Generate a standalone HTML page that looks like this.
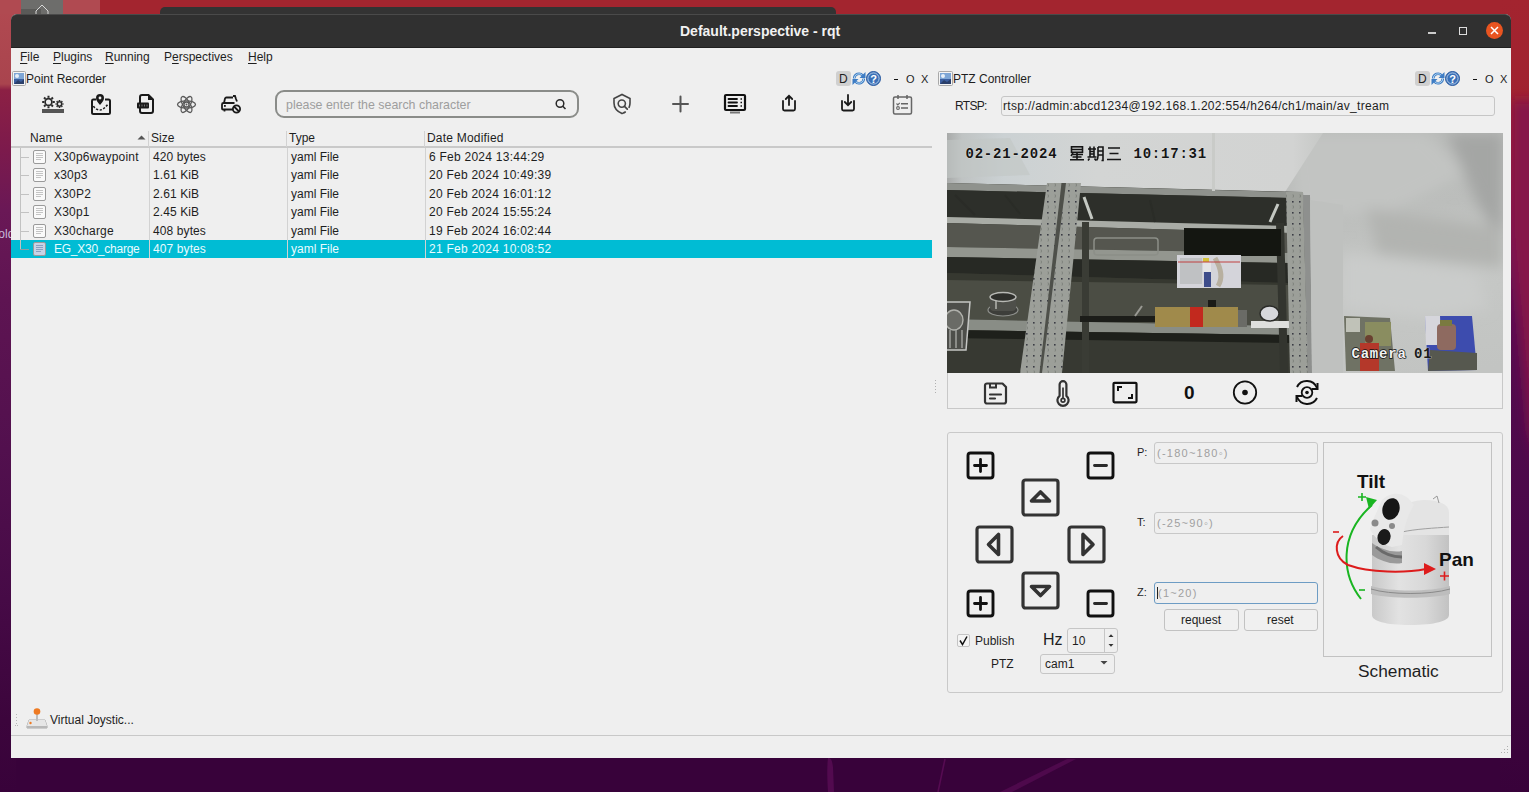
<!DOCTYPE html>
<html><head><meta charset="utf-8">
<style>
*{margin:0;padding:0;box-sizing:border-box}
html,body{width:1529px;height:792px;overflow:hidden}
body{position:relative;font-family:"Liberation Sans",sans-serif;font-size:12px;color:#1e1e1e;
background:#38023a}
.a{position:absolute}
.t{position:absolute;white-space:pre;line-height:12px;font-size:12px}
#win{left:11px;top:14px;width:1500px;height:744px;background:#efefef;border-radius:6px 6px 0 0}
#tbar{left:11px;top:14px;width:1500px;height:34px;background:#303030;border-radius:6px 6px 0 0;border-top:1px solid #4a4a4a;border-bottom:1px solid #202020}
.ul{text-decoration:underline;text-underline-offset:2px}
.hdrline{background:#c9c9c9}
.vsep{background:#d2d2d2;width:1px}
.row{left:11px;width:921px;height:18px}
.sel{background:#00bcd4}
.dim{color:#9a9a9a}
</style></head><body>
<!-- desktop bits -->
<div class="a" style="left:0;top:0;width:1529px;height:14px;background:#a3252f"></div>
<div class="a" style="left:0;top:0;width:16px;height:792px;background:linear-gradient(to bottom,#b24a51 0px,#a9444e 84px,#8c2044 90px,#7c1a4c 150px,#6a1856 210px,#5e1452 300px,#52104e 450px,#460a46 600px,#3c053c 720px,#38023a 792px)"></div>
<div class="a" style="left:1500px;top:0;width:29px;height:792px;background:linear-gradient(to bottom,#a3242f 0px,#a0222f 110px,#8c1c44 190px,#741452 250px,#5a0c50 320px,#500a4c 420px,#460747 600px,#3c043c 720px,#38023a 792px)"></div>
<div class="a" style="left:0;top:0;width:100px;height:14px;background:#b04a51"></div>
<svg class="a" style="left:1500px;top:0" width="29" height="792"><defs><filter id="bl2"><feGaussianBlur stdDeviation="6"/></filter></defs><polygon points="11,100 40,100 40,470 29,430 11,230" fill="#86184a" filter="url(#bl2)"/></svg>
<div class="a" style="left:21px;top:0;width:42px;height:14px;background:#6d6d6b"></div>
<div class="a" style="left:21px;top:9px;width:20px;height:5px;background:#5a5a58"></div>
<svg class="a" style="left:34px;top:4px" width="16" height="10"><path d="M2 10V7L8 1L14 7V10" fill="none" stroke="#d8d8d8" stroke-width="1"/></svg>
<div class="a" style="left:0;top:226px;width:12px;height:14px;overflow:hidden"><div class="t" style="left:-9px;top:2px;color:#c8b8d8">Folder</div></div>
<div class="a" style="left:160px;top:7px;width:676px;height:8px;background:#333;border-radius:5px 5px 0 0"></div>
<svg class="a" style="left:780px;top:757px" width="320" height="35"><path d="M48 1C51 1 52 3 53 10L54 35H48C47 20 47 8 48 1Z" fill="#520a4f"/><path d="M165 2L158 35" stroke="#560b52" stroke-width="1.6"/><path d="M287 2H296L232 35H220Z" fill="#4e094c"/></svg>
<!-- window -->
<div id="win" class="a" style="height:743.5px"></div>
<div id="tbar" class="a"></div>
<div class="t" style="left:680px;top:24px;color:#f2f2f2;font-weight:bold;font-size:14px;line-height:14px">Default.perspective - rqt</div>
<div class="a" style="left:1428px;top:32px;width:8px;height:2px;background:#ccc"></div>
<div class="a" style="left:1459px;top:27px;width:8px;height:8px;border:1.5px solid #ddd"></div>
<div class="a" style="left:1486px;top:22px;width:17px;height:17px;border-radius:50%;background:#e95420"></div>
<svg class="a" style="left:1486px;top:22px" width="17" height="17"><path d="M5 5L12 12M12 5L5 12" stroke="#fff" stroke-width="1.5"/></svg>

<!-- menu -->
<div class="t" style="left:20px;top:51px"><span class="ul">F</span>ile</div>
<div class="t" style="left:53px;top:51px"><span class="ul">P</span>lugins</div>
<div class="t" style="left:105px;top:51px"><span class="ul">R</span>unning</div>
<div class="t" style="left:164px;top:51px">P<span class="ul">e</span>rspectives</div>
<div class="t" style="left:248px;top:51px"><span class="ul">H</span>elp</div>

<!-- point recorder title -->
<svg class="a" style="left:12px;top:71px" width="14" height="15"><rect x="0.5" y="0.5" width="13" height="14" rx="1" fill="#f4f4f4" stroke="#a8a8a8"/><rect x="2" y="2" width="10" height="11" fill="#3b5fa0"/><rect x="2" y="2" width="10" height="6" fill="#7ea6d6"/><circle cx="5" cy="5" r="2" fill="#e8f0f8"/><path d="M2 13L6 9L9 11L12 8V13Z" fill="#2a3f6a"/></svg>
<div class="t" style="left:26px;top:72.5px">Point Recorder</div>

<!-- dock buttons left -->
<div class="a" style="left:836px;top:71px;width:15px;height:15px;background:#d0d0d0;border-radius:3px"></div>
<div class="t" style="left:839px;top:73px;font-size:12px">D</div>
<svg class="a" style="left:852px;top:71px" width="14" height="15"><g fill="none" stroke="#3d7cc4" stroke-width="2.6"><path d="M2.2 7.5A4.8 4.8 0 0 1 10.6 4.4"/><path d="M11.8 7.5A4.8 4.8 0 0 1 3.4 10.6"/></g><g fill="none" stroke="#bfe0f6" stroke-width="0.9"><path d="M2.2 7.5A4.8 4.8 0 0 1 10.6 4.4"/><path d="M11.8 7.5A4.8 4.8 0 0 1 3.4 10.6"/></g><path d="M13.5 1V7H7.5Z" fill="#3d7cc4"/><path d="M0.5 14V8H6.5Z" fill="#3d7cc4"/></svg>
<svg class="a" style="left:866px;top:71px" width="15" height="15"><circle cx="7.5" cy="7.5" r="7" fill="#3a70b8" stroke="#2a5aa0"/><circle cx="7.5" cy="7.5" r="5.6" fill="none" stroke="#c8dcf0" stroke-width="0.8"/><text x="7.5" y="11.5" font-family="Liberation Sans" font-size="11" font-weight="bold" fill="#fff" text-anchor="middle">?</text></svg>
<div class="a" style="left:894px;top:78.5px;width:3.5px;height:1.6px;background:#111"></div>
<div class="t" style="left:906px;top:74px;font-size:11px;line-height:11px">O</div>
<div class="t" style="left:921px;top:74px;font-size:11px;line-height:11px">X</div>

<!-- toolbar icons -->
<svg class="a" style="left:40px;top:93px" width="26" height="22"><circle cx="8.5" cy="9" r="3.4" fill="none" stroke="#2a2a2a" stroke-width="1.7"/><path d="M12.70 9.00L14.80 9.00M11.47 11.97L12.95 13.45M8.50 13.20L8.50 15.30M5.53 11.97L4.05 13.45M4.30 9.00L2.20 9.00M5.53 6.03L4.05 4.55M8.50 4.80L8.50 2.70M11.47 6.03L12.95 4.55" stroke="#2a2a2a" stroke-width="2.0"/><circle cx="19.5" cy="11" r="2.2" fill="none" stroke="#2a2a2a" stroke-width="1.5"/><path d="M22.40 11.00L23.50 11.00M21.55 13.05L22.33 13.83M19.50 13.90L19.50 15.00M17.45 13.05L16.67 13.83M16.60 11.00L15.50 11.00M17.45 8.95L16.67 8.17M19.50 8.10L19.50 7.00M21.55 8.95L22.33 8.17" stroke="#2a2a2a" stroke-width="1.6"/><rect x="2" y="16" width="22" height="4" fill="#555"/></svg>
<svg class="a" style="left:89px;top:92px" width="24" height="24">
 <path d="M7 7.5H4.2A1.5 1.5 0 0 0 3 9V20.5A1.5 1.5 0 0 0 4.5 22H19.5A1.5 1.5 0 0 0 21 20.5V9A1.5 1.5 0 0 0 19.5 7.5H16" fill="none" stroke="#1a1a1a" stroke-width="2"/>
 <path d="M11 13C8.5 10 7 8.5 7 6A4 4 0 0 1 15 6C15 8.5 13.5 10 11 13Z" fill="#1a1a1a"/>
 <circle cx="11" cy="6" r="1.4" fill="#efefef"/>
 <path d="M4.5 14C6 17 9 18 11 18C14 18 16.5 15 19 12" fill="none" stroke="#1a1a1a" stroke-width="1.6" stroke-dasharray="2.2 1.6"/>
</svg>
<svg class="a" style="left:135px;top:93px" width="22" height="22">
 <path d="M5 4A2 2 0 0 1 7 2H13.5L18 6.5V18A2 2 0 0 1 16 20H7A2 2 0 0 1 5 18Z" fill="none" stroke="#1a1a1a" stroke-width="2"/>
 <path d="M13 2V7H18Z" fill="#1a1a1a"/>
 <rect x="2" y="9.5" width="12" height="6" rx="1" fill="#1a1a1a"/>
 <path d="M4.5 11.5V13.5M7 11.5V13.5M9.5 11.5V13.5M12 11.5V13.5" stroke="#888" stroke-width="0.8"/>
</svg>
<svg class="a" style="left:176px;top:95px" width="21" height="19">
 <g fill="none" stroke="#5a5a5a" stroke-width="1.3">
  <ellipse cx="10.5" cy="9.5" rx="9" ry="3.6"/>
  <ellipse cx="10.5" cy="9.5" rx="9" ry="3.6" transform="rotate(60 10.5 9.5)"/>
  <ellipse cx="10.5" cy="9.5" rx="9" ry="3.6" transform="rotate(120 10.5 9.5)"/>
  <circle cx="10.5" cy="9.5" r="2.5"/>
 </g>
 <circle cx="10.5" cy="9.5" r="1" fill="#5a5a5a"/>
</svg>
<svg class="a" style="left:220px;top:94px" width="22" height="20">
 <g fill="none" stroke="#1a1a1a" stroke-width="1.8">
  <path d="M14.5 9H3.5A1.5 1.5 0 0 0 2 10.5V14.5A1 1 0 0 0 3 15.5H13"/>
  <path d="M4 9L5 4.5A1.5 1.5 0 0 1 6.5 3.5H13"/>
  <path d="M13 2H15L16 5L17 7.5"/>
  <path d="M4.5 15.5V17.5"/>
 </g>
 <rect x="4" y="11" width="1.8" height="1.8" fill="#1a1a1a"/>
 <circle cx="16.5" cy="15" r="3.6" fill="#efefef" stroke="#1a1a1a" stroke-width="1.8"/>
 <path d="M14 12.5L19 17.5" stroke="#1a1a1a" stroke-width="1.8"/>
</svg>

<!-- search -->
<div class="a" style="left:275px;top:90px;width:304px;height:28px;border:2px solid #8a8c89;border-radius:9px"></div>
<div class="t dim" style="left:286px;top:98.5px;font-size:12.4px;line-height:12.4px;color:#9e9e9e">please enter the search character</div>
<svg class="a" style="left:554px;top:97px" width="14" height="14"><circle cx="6" cy="6.5" r="3.8" fill="none" stroke="#2a2a2a" stroke-width="1.5"/><path d="M8.8 9.3L11.5 12" stroke="#2a2a2a" stroke-width="1.6"/></svg>

<svg class="a" style="left:611px;top:92px" width="22" height="24">
 <path d="M14.3 20C13.3 20.7 12.2 21.1 11 21.6C6.5 19.6 3 16 3 11V6.5L11 2.5L19 6.5V11C19 12.6 18.7 14 18.1 15.3" fill="none" stroke="#444" stroke-width="1.6" stroke-linecap="round"/>
 <circle cx="10.8" cy="11.6" r="3.6" fill="none" stroke="#444" stroke-width="1.6"/>
 <path d="M13.5 14.3L16.3 17.1" stroke="#444" stroke-width="1.7" stroke-linecap="round"/>
</svg>
<svg class="a" style="left:672px;top:95px" width="18" height="18"><path d="M8.5 1.5V16.5M1 9H16" stroke="#555" stroke-width="2" stroke-linecap="round"/></svg>
<svg class="a" style="left:722px;top:92px" width="26" height="24">
 <rect x="3" y="3" width="20" height="15" rx="1" fill="none" stroke="#111" stroke-width="2.2"/>
 <path d="M6.5 7H15M6.5 10.5H15M6.5 14H15" stroke="#111" stroke-width="1.8" stroke-linecap="round"/>
 <path d="M18.5 7H20M18.5 10.5H20M18.5 14H20" stroke="#111" stroke-width="1.6"/>
 <rect x="8" y="19.5" width="10" height="2" fill="#777"/>
</svg>
<svg class="a" style="left:780px;top:93px" width="18" height="20">
 <path d="M3 8V16A1.5 1.5 0 0 0 4.5 17.5H13.5A1.5 1.5 0 0 0 15 16V8" fill="none" stroke="#1a1a1a" stroke-width="1.8" stroke-linecap="round"/>
 <path d="M9 12V3M5.8 6L9 2.8L12.2 6" fill="none" stroke="#1a1a1a" stroke-width="1.8" stroke-linecap="round"/>
</svg>
<svg class="a" style="left:839px;top:93px" width="18" height="20">
 <path d="M3 8V16A1.5 1.5 0 0 0 4.5 17.5H13.5A1.5 1.5 0 0 0 15 16V8" fill="none" stroke="#1a1a1a" stroke-width="1.8" stroke-linecap="round"/>
 <path d="M9 2V12M5.8 9L9 12.2L12.2 9" fill="none" stroke="#1a1a1a" stroke-width="1.8" stroke-linecap="round"/>
</svg>
<svg class="a" style="left:891px;top:94px" width="23" height="22">
 <rect x="2.5" y="3" width="18" height="17" rx="1.5" fill="none" stroke="#666" stroke-width="1.5"/>
 <path d="M7 1V5M16 1V5" stroke="#666" stroke-width="1.5"/>
 <path d="M5.5 9.5L6.8 10.8L8.8 8.8" fill="none" stroke="#666" stroke-width="1.2"/>
 <path d="M10 9.8H17M10 14H17" stroke="#666" stroke-width="1.5"/>
 <circle cx="7" cy="14" r="1.4" fill="none" stroke="#666" stroke-width="1.1"/>
</svg>

<!-- table -->
<div class="t" style="left:30px;top:132px;letter-spacing:0.1px">Name</div>
<svg class="a" style="left:137px;top:134px" width="9" height="6"><path d="M0.5 5.5L4.5 1.5L8.5 5.5Z" fill="#555"/></svg>
<div class="t" style="left:151px;top:132px">Size</div>
<div class="t" style="left:289px;top:132px">Type</div>
<div class="t" style="left:427px;top:132px;letter-spacing:0.2px">Date Modified</div>
<div class="a hdrline" style="left:11px;top:146px;width:921px;height:2px"></div>
<div class="a vsep" style="left:148px;top:131px;height:16px"></div>
<div class="a vsep" style="left:286px;top:131px;height:16px"></div>
<div class="a vsep" style="left:424px;top:131px;height:16px"></div>
<div class="a sel" style="left:11px;top:240px;width:921px;height:18px"></div>
<div class="a vsep" style="left:149px;top:148px;height:110px"></div>
<div class="a vsep" style="left:287px;top:148px;height:110px"></div>
<div class="a vsep" style="left:425px;top:148px;height:110px"></div>
<div class="a" style="left:20px;top:148px;width:1px;height:101px;background:#c2c2c2"></div>
<div class="a" style="left:20px;top:156.5px;width:9px;height:1px;background:#c2c2c2"></div>
<div class="a" style="left:20px;top:174.5px;width:9px;height:1px;background:#c2c2c2"></div>
<div class="a" style="left:20px;top:193.5px;width:9px;height:1px;background:#c2c2c2"></div>
<div class="a" style="left:20px;top:211.5px;width:9px;height:1px;background:#c2c2c2"></div>
<div class="a" style="left:20px;top:230.5px;width:9px;height:1px;background:#c2c2c2"></div>
<div class="a" style="left:20px;top:248.5px;width:9px;height:1px;background:#8f9ea3"></div>
<svg class="a" style="left:33px;top:150px" width="13" height="14"><rect x="0.5" y="0.5" width="12" height="13" rx="1.5" fill="#fafafa" stroke="#9a9a9a"/><path d="M3 3.5H10M3 5.5H10M3 7.5H10M3 9.5H8" stroke="#c4c4c4" stroke-width="1"/></svg>
<div class="t" style="left:54px;top:151px;letter-spacing:0.2px;">X30p6waypoint</div>
<div class="t" style="left:153px;top:151px;letter-spacing:0.1px;">420 bytes</div>
<div class="t" style="left:291px;top:151px;">yaml File</div>
<div class="t" style="left:429px;top:151px;letter-spacing:0.25px;">6 Feb 2024 13:44:29</div>
<svg class="a" style="left:33px;top:168px" width="13" height="14"><rect x="0.5" y="0.5" width="12" height="13" rx="1.5" fill="#fafafa" stroke="#9a9a9a"/><path d="M3 3.5H10M3 5.5H10M3 7.5H10M3 9.5H8" stroke="#c4c4c4" stroke-width="1"/></svg>
<div class="t" style="left:54px;top:169px;letter-spacing:0.2px;">x30p3</div>
<div class="t" style="left:153px;top:169px;letter-spacing:0.1px;">1.61 KiB</div>
<div class="t" style="left:291px;top:169px;">yaml File</div>
<div class="t" style="left:429px;top:169px;letter-spacing:0.25px;">20 Feb 2024 10:49:39</div>
<svg class="a" style="left:33px;top:187px" width="13" height="14"><rect x="0.5" y="0.5" width="12" height="13" rx="1.5" fill="#fafafa" stroke="#9a9a9a"/><path d="M3 3.5H10M3 5.5H10M3 7.5H10M3 9.5H8" stroke="#c4c4c4" stroke-width="1"/></svg>
<div class="t" style="left:54px;top:188px;letter-spacing:0.2px;">X30P2</div>
<div class="t" style="left:153px;top:188px;letter-spacing:0.1px;">2.61 KiB</div>
<div class="t" style="left:291px;top:188px;">yaml File</div>
<div class="t" style="left:429px;top:188px;letter-spacing:0.25px;">20 Feb 2024 16:01:12</div>
<svg class="a" style="left:33px;top:205px" width="13" height="14"><rect x="0.5" y="0.5" width="12" height="13" rx="1.5" fill="#fafafa" stroke="#9a9a9a"/><path d="M3 3.5H10M3 5.5H10M3 7.5H10M3 9.5H8" stroke="#c4c4c4" stroke-width="1"/></svg>
<div class="t" style="left:54px;top:206px;letter-spacing:0.2px;">X30p1</div>
<div class="t" style="left:153px;top:206px;letter-spacing:0.1px;">2.45 KiB</div>
<div class="t" style="left:291px;top:206px;">yaml File</div>
<div class="t" style="left:429px;top:206px;letter-spacing:0.25px;">20 Feb 2024 15:55:24</div>
<svg class="a" style="left:33px;top:224px" width="13" height="14"><rect x="0.5" y="0.5" width="12" height="13" rx="1.5" fill="#fafafa" stroke="#9a9a9a"/><path d="M3 3.5H10M3 5.5H10M3 7.5H10M3 9.5H8" stroke="#c4c4c4" stroke-width="1"/></svg>
<div class="t" style="left:54px;top:225px;letter-spacing:0.2px;">X30charge</div>
<div class="t" style="left:153px;top:225px;letter-spacing:0.1px;">408 bytes</div>
<div class="t" style="left:291px;top:225px;">yaml File</div>
<div class="t" style="left:429px;top:225px;letter-spacing:0.25px;">19 Feb 2024 16:02:44</div>
<svg class="a" style="left:33px;top:242px" width="13" height="14"><rect x="0.5" y="0.5" width="12" height="13" rx="1.5" fill="#c7d3e6" stroke="#9a9a9a"/><path d="M3 3.5H10M3 5.5H10M3 7.5H10M3 9.5H8" stroke="#8aa0c0" stroke-width="1"/></svg>
<div class="t" style="left:54px;top:243px;letter-spacing:-0.25px;color:#e8fbff;">EG_X30_charge</div>
<div class="t" style="left:153px;top:243px;letter-spacing:0.1px;color:#e8fbff;">407 bytes</div>
<div class="t" style="left:291px;top:243px;color:#e8fbff;">yaml File</div>
<div class="t" style="left:429px;top:243px;letter-spacing:0.25px;color:#e8fbff;">21 Feb 2024 10:08:52</div>
<!-- PTZ title -->
<svg class="a" style="left:938px;top:71px" width="15" height="15"><rect x="0.5" y="0.5" width="14" height="14" rx="1" fill="#f4f4f4" stroke="#a8a8a8"/><rect x="2" y="2" width="11" height="11" fill="#3b5fa0"/><rect x="2" y="2" width="11" height="6" fill="#7ea6d6"/><circle cx="5" cy="5" r="2" fill="#e8f0f8"/><path d="M2 13L6 9L9 11L13 8V13Z" fill="#2a3f6a"/></svg>
<div class="t" style="left:953px;top:72.5px">PTZ Controller</div>
<div class="a" style="left:1415px;top:71px;width:15px;height:15px;background:#d0d0d0;border-radius:3px"></div>
<div class="t" style="left:1418px;top:73px">D</div>
<svg class="a" style="left:1431px;top:71px" width="14" height="15"><g fill="none" stroke="#3d7cc4" stroke-width="2.6"><path d="M2.2 7.5A4.8 4.8 0 0 1 10.6 4.4"/><path d="M11.8 7.5A4.8 4.8 0 0 1 3.4 10.6"/></g><g fill="none" stroke="#bfe0f6" stroke-width="0.9"><path d="M2.2 7.5A4.8 4.8 0 0 1 10.6 4.4"/><path d="M11.8 7.5A4.8 4.8 0 0 1 3.4 10.6"/></g><path d="M13.5 1V7H7.5Z" fill="#3d7cc4"/><path d="M0.5 14V8H6.5Z" fill="#3d7cc4"/></svg>
<svg class="a" style="left:1445px;top:71px" width="15" height="15"><circle cx="7.5" cy="7.5" r="7" fill="#3a70b8" stroke="#2a5aa0"/><circle cx="7.5" cy="7.5" r="5.6" fill="none" stroke="#c8dcf0" stroke-width="0.8"/><text x="7.5" y="11.5" font-family="Liberation Sans" font-size="11" font-weight="bold" fill="#fff" text-anchor="middle">?</text></svg>
<div class="a" style="left:1473px;top:78.5px;width:3.5px;height:1.6px;background:#111"></div>
<div class="t" style="left:1485px;top:74px;font-size:11px;line-height:11px">O</div>
<div class="t" style="left:1500px;top:74px;font-size:11px;line-height:11px">X</div>

<!-- RTSP -->
<div class="t" style="left:955px;top:100px;letter-spacing:-0.7px">RTSP:</div>
<div class="a" style="left:1001px;top:96px;width:494px;height:20px;border:1px solid #c6c6c6;border-radius:3px;background:#efefef"></div>
<div class="t" style="left:1003px;top:100px;letter-spacing:0.32px">rtsp://admin:abcd1234@192.168.1.202:554/h264/ch1/main/av_tream</div>

<!-- camera -->
<svg class="a" style="left:947px;top:133px" width="556" height="240" viewBox="0 0 556 240">
<defs>
<linearGradient id="wall" x1="0.6" y1="0" x2="0.9" y2="1"><stop offset="0" stop-color="#b8bab8"/><stop offset="0.35" stop-color="#bcbebc"/><stop offset="0.6" stop-color="#c6c8c6"/><stop offset="1" stop-color="#c2c4c2"/></linearGradient>
<linearGradient id="ceil" x1="0" y1="0" x2="1" y2="0"><stop offset="0" stop-color="#a8aaa9"/><stop offset="0.04" stop-color="#bfc3c3"/><stop offset="0.15" stop-color="#cbd1d3"/><stop offset="0.4" stop-color="#d3d5d4"/><stop offset="0.92" stop-color="#d2d3d2"/><stop offset="1" stop-color="#c6c8c6"/></linearGradient>
<filter id="soft" x="-20%" y="-20%" width="140%" height="140%"><feGaussianBlur stdDeviation="7"/></filter>
<pattern id="holes" width="7" height="11" patternUnits="userSpaceOnUse"><rect width="7" height="11" fill="#9c9f99"/><rect x="2" y="2" width="1.6" height="1.6" fill="#3a3c44"/><path d="M3 6.5Q4 8 3 9.5" stroke="#7d817b" stroke-width="1" fill="none"/></pattern>
</defs>
<rect width="556" height="240" fill="url(#wall)"/>
<g filter="url(#soft)">
<polygon points="340,0 480,0 520,40 440,80 350,85" fill="#c2c4c2"/>
<polygon points="500,0 556,0 556,110 530,70" fill="#a4a6a4"/>
<polygon points="420,75 556,95 556,135 430,120" fill="#b2b4b1"/>
<polygon points="396,120 530,140 540,175 480,185 396,175" fill="#cacccb"/>
</g>
<polygon points="0.0,0.0 376.0,0.0 338.0,59.0 0.0,50.0" fill="url(#ceil)"/>
<polygon points="0.0,7.0 63.0,5.0 83.0,42.0 0.0,45.0" fill="#c2c6c5" opacity="0.6"/>
<polygon points="0.0,50.0 356.0,59.0 361.0,240.0 0.0,240.0" fill="#353730"/>
<polygon points="0.0,50.0 343.0,59.0 343.0,65.0 0.0,57.0" fill="#8f928d"/>
<polygon points="0.0,57.0 343.0,65.0 343.0,93.0 0.0,84.0" fill="#2d2f2a"/>
<polygon points="0.0,84.0 343.0,93.0 343.0,100.0 0.0,90.0" fill="#a9aca6"/>
<polygon points="0.0,90.0 343.0,100.0 343.0,120.0 0.0,114.0" fill="#55564f"/>
<polygon points="0.0,114.0 343.0,120.0 343.0,130.0 0.0,124.0" fill="#93968f"/>
<polygon points="0.0,124.0 343.0,130.0 343.0,150.0 0.0,140.0" fill="#272924"/><polygon points="0.0,140.0 343.0,150.0 343.0,152.0 0.0,147.0" fill="#363830"/>
<polygon points="0.0,147.0 343.0,152.0 343.0,193.0 0.0,186.0" fill="#4b4d44"/>
<polygon points="0.0,186.0 343.0,193.0 343.0,202.0 0.0,197.0" fill="#898d86"/>
<polygon points="0.0,197.0 343.0,202.0 343.0,240.0 0.0,240.0" fill="#373932"/><polygon points="0.0,197.0 343.0,202.0 343.0,210.0 0.0,205.0" fill="#1e201b"/>
<path d="M8 62L28 82M58 62L73 81M203 67L208 89" stroke="#2a2c27" stroke-width="2"/>
<polygon points="135.0,89.0 142.0,89.0 142.0,240.0 135.0,240.0" fill="#3a3c35"/>
<polygon points="329.0,90.0 337.0,90.0 341.0,240.0 333.0,240.0" fill="#33352f"/>
<path d="M137 64L145 86M331 71L323 89" stroke="#c4c8c2" stroke-width="3"/>
<rect x="147" y="105" width="64" height="17" rx="3" fill="none" stroke="#8c8f88" stroke-width="1.5"/>
<polygon points="237.0,95.0 334.0,96.0 334.0,123.0 237.0,123.0" fill="#141611"/>
<rect x="230" y="122" width="64" height="33" fill="#d4d4da"/>
<rect x="233" y="125" width="22" height="26" fill="#bfc1c3"/>
<rect x="256" y="129" width="8" height="10" fill="#e4e4e6"/>
<rect x="257" y="139" width="7" height="15" fill="#3d4c8a"/>
<rect x="256" y="125" width="6" height="4" fill="#d4c23a"/>
<path d="M268 125Q278 142 271 153" stroke="#b8b0a0" stroke-width="5" fill="none"/>
<path d="M231 129H293" stroke="#c04040" stroke-width="1"/>
<rect x="208" y="174" width="83" height="20" fill="#a08a4b"/>
<rect x="243" y="174" width="13" height="20" fill="#c2291e"/>
<rect x="133" y="183" width="75" height="6" fill="#1c1d19"/>
<path d="M188 183L195 173" stroke="#9a9a94" stroke-width="2"/>
<rect x="261" y="167" width="8" height="7" fill="#1a1b17"/>
<rect x="291" y="177" width="9" height="17" fill="#6a6b66"/>
<rect x="304" y="188" width="39" height="7" fill="#dedfdd"/>
<ellipse cx="322.5" cy="180.5" rx="9.5" ry="7.5" fill="#d6d7db" stroke="#2a2b28" stroke-width="1.5"/>
<ellipse cx="56" cy="177" rx="15" ry="6" fill="#3d3e3a" stroke="#8e908c" stroke-width="1.2"/>
<rect x="43" y="164" width="26" height="14" rx="4" fill="#4e4f4a"/><path d="M49 166V176" stroke="#9a9b96" stroke-width="2"/>
<ellipse cx="56" cy="164" rx="13" ry="4.5" fill="#2e2f2b" stroke="#b8b9b5" stroke-width="1.4"/>
<polygon points="-1.0,169.0 23.0,169.0 19.0,217.0 -1.0,217.0" fill="#4d4e4a" stroke="#c5c6c4" stroke-width="1.5"/>
<ellipse cx="7" cy="187" rx="9" ry="10" fill="#6a6b66" stroke="#b0b1ac" stroke-width="1.4"/>
<path d="M3 197V215M9 197V215M15 197V215" stroke="#a0a19d" stroke-width="1.5"/>
<polygon points="100.0,50.0 116.0,50.0 94.0,240.0 73.0,240.0" fill="url(#holes)"/>
<polygon points="114.5,50.0 120.0,50.0 96.0,240.0 92.5,240.0" fill="#4e504a"/>
<polygon points="119.0,50.0 134.0,50.0 115.0,240.0 95.0,240.0" fill="url(#holes)"/>
<polygon points="339.0,59.0 356.0,59.0 361.0,240.0 343.0,240.0" fill="url(#holes)"/>
<polygon points="356.0,62.0 363.0,62.0 365.0,240.0 361.0,240.0" fill="#8e908e"/>
<polygon points="363.0,67.0 396.0,72.0 396.0,240.0 365.0,240.0" fill="#bfc1bf"/>
<rect x="265" y="0" width="3" height="58" fill="#c9cbc8"/>
<polygon points="397.0,183.0 443.0,185.0 448.0,238.0 399.0,238.0" fill="#6f7264"/>
<rect x="399" y="185" width="14" height="14" fill="#c0c2b8"/>
<rect x="418" y="189" width="26" height="24" fill="#8a8d60"/>
<rect x="413" y="210" width="19" height="28" fill="#b4382a"/>
<circle cx="422" cy="206" r="4" fill="#6a4030"/>
<polygon points="478.0,183.0 525.0,183.0 530.0,237.0 481.0,238.0" fill="#3d4cae"/>
<polygon points="478.0,183.0 493.0,183.0 494.0,212.0 479.0,212.0" fill="#d6d6dc"/>
<rect x="490" y="191" width="19" height="26" rx="4" fill="#8e6a60"/>
<rect x="493" y="187" width="12" height="6" fill="#7a7a40"/>
<polygon points="483.0,217.0 530.0,220.0 530.0,237.0 481.0,238.0" fill="#56584f"/>
<g font-family="Liberation Mono" font-weight="bold" font-size="14" style="letter-spacing:0.78px">
<text x="18.5" y="24.80000000000001" fill="#151515" stroke="#e8e8e8" stroke-width="0.6" paint-order="stroke">02-21-2024</text>
<text x="186.5" y="24.80000000000001" fill="#151515" stroke="#e8e8e8" stroke-width="0.6" paint-order="stroke">10:17:31</text>
<text x="404.5" y="225.3" fill="#f2f2f2" stroke="#111" stroke-width="1.4" paint-order="stroke">Camera</text>
<text x="467" y="225.3" fill="#1a1a1a" stroke="#ddd" stroke-width="0.6" paint-order="stroke">01</text>
</g>
<g fill="none" stroke="#151515" stroke-width="1.6" transform="translate(122,13)">
<rect x="2.5" y="0.8" width="11" height="5.5"/><path d="M2.5 3.5H13.5M4 7L2 10M3 8.5H14M8 7V14M3.5 11H12.5M1 13.8H15"/>
<g transform="translate(18,0)"><path d="M1 3H9M3 0.5V11M7 0.5V11M3 5.5H7M3 8H7M0.5 11H9.5M2.5 12.5L1 14.5M7.5 12.5L9 14.5"/><path d="M11 1H16V14.5H14.5M11 1V10Q11 13 9.5 14.5M11 5H16M11 9H16"/></g>
<g transform="translate(37,0)"><path d="M2 2H14M3.5 7.5H12.5M1 13.5H15"/></g>
</g>
</svg>
<!-- /camera -->
<!-- camera icon bar -->
<div class="a" style="left:947px;top:373px;width:556px;height:36px;border:1px solid #c8c8c8;border-top:none;background:#efefef"></div>
<svg class="a" style="left:983px;top:380px" width="26" height="27">
 <path d="M4 3.5H19.5L23 7V21.5A2 2 0 0 1 21 23.5H4A2 2 0 0 1 2 21.5V5.5A2 2 0 0 1 4 3.5Z" fill="none" stroke="#333" stroke-width="2.2" stroke-linejoin="round"/>
 <path d="M7 3.5V7.5H13V3.5" fill="none" stroke="#333" stroke-width="2"/>
 <path d="M7 14.5H18M7 18.5H12" stroke="#333" stroke-width="2.2" stroke-linecap="round"/>
</svg>
<svg class="a" style="left:1053px;top:380px" width="20" height="27">
 <path d="M6.6 15.8V4.6A3.4 3.4 0 0 1 13.4 4.6V15.8A5.6 5.6 0 1 1 6.6 15.8Z" fill="none" stroke="#333" stroke-width="2.2"/>
 <circle cx="10" cy="20.2" r="1.9" fill="none" stroke="#333" stroke-width="1.7"/>
 <path d="M10 7.5V18" stroke="#333" stroke-width="1.7"/>
</svg>
<svg class="a" style="left:1111px;top:380px" width="28" height="26">
 <rect x="2.5" y="2.8" width="23" height="19.5" rx="1" fill="none" stroke="#111" stroke-width="2.2"/>
 <path d="M7 11V7H11M21 14V18H17" fill="none" stroke="#111" stroke-width="2"/>
</svg>
<div class="t" style="left:1184px;top:383px;font-size:19px;line-height:19px;font-weight:bold;color:#111">0</div>
<svg class="a" style="left:1231px;top:379px" width="28" height="27">
 <circle cx="14" cy="13.5" r="11.2" fill="none" stroke="#111" stroke-width="1.8"/>
 <circle cx="14" cy="13.5" r="2.8" fill="#111"/>
</svg>
<svg class="a" style="left:1292px;top:379px" width="30" height="27">
 <path d="M25 9A11 11 0 0 0 5 8" fill="none" stroke="#111" stroke-width="2"/>
 <path d="M5 18A11 11 0 0 0 25 19" fill="none" stroke="#111" stroke-width="2"/>
 <path d="M25.5 4V10H20" fill="none" stroke="#111" stroke-width="2"/>
 <path d="M4.5 23V17H10" fill="none" stroke="#111" stroke-width="2"/>
 <circle cx="15" cy="13.5" r="5.3" fill="none" stroke="#111" stroke-width="1.8"/>
 <circle cx="15" cy="13.5" r="1.8" fill="#111"/>
</svg>

<!-- splitter dots -->
<svg class="a" style="left:934px;top:379px" width="4" height="16"><g fill="#b0b0b0"><rect x="1" y="1" width="1" height="1"/><rect x="1" y="4" width="1" height="1"/><rect x="1" y="7" width="1" height="1"/><rect x="1" y="10" width="1" height="1"/><rect x="1" y="13" width="1" height="1"/><rect x="1" y="16" width="1" height="1"/></g></svg>

<!-- PTZ group box -->
<div class="a" style="left:947px;top:432px;width:556px;height:261px;border:1px solid #c9c9c9;border-radius:3px"></div>

<!-- ptz buttons -->
<svg class="a" style="left:966px;top:451px" width="29" height="29"><rect x="2" y="2" width="25" height="25" rx="2.5" fill="none" stroke="#111" stroke-width="2.9"/><path d="M14.5 8.5V20.5M8.5 14.5H20.5" stroke="#111" stroke-width="2.8" stroke-linecap="round"/></svg>
<svg class="a" style="left:1086px;top:451px" width="29" height="29"><rect x="2" y="2" width="25" height="25" rx="2.5" fill="none" stroke="#111" stroke-width="2.9"/><path d="M8.5 14.5H20.5" stroke="#2a2a2a" stroke-width="2.8" stroke-linecap="round"/></svg>
<svg class="a" style="left:966px;top:589px" width="29" height="29"><rect x="2" y="2" width="25" height="25" rx="2.5" fill="none" stroke="#111" stroke-width="2.9"/><path d="M14.5 8.5V20.5M8.5 14.5H20.5" stroke="#111" stroke-width="2.8" stroke-linecap="round"/></svg>
<svg class="a" style="left:1086px;top:589px" width="29" height="29"><rect x="2" y="2" width="25" height="25" rx="2.5" fill="none" stroke="#111" stroke-width="2.9"/><path d="M8.5 14.5H20.5" stroke="#2a2a2a" stroke-width="2.8" stroke-linecap="round"/></svg>

<svg class="a" style="left:1021px;top:478px" width="39" height="39"><rect x="2" y="2" width="35" height="35" rx="2.5" fill="none" stroke="#333" stroke-width="3.2"/><path d="M19.5 14L28.5 23H10.5Z" fill="none" stroke="#333" stroke-width="3.6" stroke-linejoin="round"/></svg>
<svg class="a" style="left:1021px;top:571px" width="39" height="39"><rect x="2" y="2" width="35" height="35" rx="2.5" fill="none" stroke="#333" stroke-width="3.2"/><path d="M19.5 24.5L28.5 15.5H10.5Z" fill="none" stroke="#333" stroke-width="3.6" stroke-linejoin="round"/></svg>
<svg class="a" style="left:975px;top:525px" width="39" height="39"><rect x="2" y="2" width="35" height="35" rx="2.5" fill="none" stroke="#333" stroke-width="3.2"/><path d="M13.5 19.5L23.5 9.5V29.5Z" fill="none" stroke="#333" stroke-width="3.6" stroke-linejoin="round"/></svg>
<svg class="a" style="left:1067px;top:525px" width="39" height="39"><rect x="2" y="2" width="35" height="35" rx="2.5" fill="none" stroke="#333" stroke-width="3.2"/><path d="M26 19.5L16 9.5V29.5Z" fill="none" stroke="#333" stroke-width="3.6" stroke-linejoin="round"/></svg>

<!-- publish / hz / ptz -->
<div class="a" style="left:957px;top:634px;width:13px;height:13px;border:1px solid #c4c4c4;border-radius:2px;background:#f4f4f4"></div>
<svg class="a" style="left:957px;top:634px" width="13" height="13"><path d="M3 6.5L5.5 10.5L10 2.5" fill="none" stroke="#111" stroke-width="1.5"/></svg>
<div class="t" style="left:975px;top:635px">Publish</div>
<div class="t" style="left:1043px;top:632px;font-size:16px;line-height:16px">Hz</div>
<div class="a" style="left:1067px;top:628px;width:51px;height:25px;border:1px solid #c6c6c6;border-radius:3px;background:#efefef"></div>
<div class="a" style="left:1104px;top:629px;width:1px;height:23px;background:#c6c6c6"></div>
<svg class="a" style="left:1105px;top:629px" width="12" height="23"><path d="M3.5 8L6 5.2L8.5 8Z" fill="#333"/><path d="M3.5 15L6 17.8L8.5 15Z" fill="#333"/></svg>
<div class="t" style="left:1072px;top:635px">10</div>
<div class="t" style="left:991px;top:657.5px">PTZ</div>
<div class="a" style="left:1040px;top:654px;width:75px;height:20px;border:1px solid #c6c6c6;border-radius:3px;background:#efefef"></div>
<div class="t" style="left:1045px;top:658px">cam1</div>
<svg class="a" style="left:1099px;top:659px" width="10" height="8"><path d="M1.5 2L5 5.5L8.5 2Z" fill="#444"/></svg>

<!-- P T Z -->
<div class="t" style="left:1137px;top:447px;font-size:11px;line-height:11px">P:</div>
<div class="a" style="left:1154px;top:442px;width:164px;height:22px;border:1px solid #c8c8c8;border-radius:3px;background:#efefef"></div>
<div class="t" style="left:1157px;top:447.5px;color:#a0a0a0;font-size:11px;line-height:11px;letter-spacing:1.25px">(-180~180◦)</div>
<div class="t" style="left:1137px;top:517px;font-size:11px;line-height:11px">T:</div>
<div class="a" style="left:1154px;top:512px;width:164px;height:22px;border:1px solid #c8c8c8;border-radius:3px;background:#efefef"></div>
<div class="t" style="left:1157px;top:517.5px;color:#a0a0a0;font-size:11px;line-height:11px;letter-spacing:1.25px">(-25~90◦)</div>
<div class="t" style="left:1137px;top:587px;font-size:11px;line-height:11px">Z:</div>
<div class="a" style="left:1154px;top:582px;width:164px;height:22px;border:1.3px solid #6d9cc4;border-radius:3px;background:#efefef"></div>
<div class="a" style="left:1157px;top:587px;width:1px;height:12px;background:#222"></div>
<div class="t" style="left:1158px;top:587.5px;color:#a0a0a0;font-size:11px;line-height:11px;letter-spacing:1.25px">(1~20)</div>
<div class="a" style="left:1164px;top:609px;width:75px;height:22px;border:1px solid #c2c2c2;border-radius:3px;background:#f0f0f0"></div>
<div class="t" style="left:1181px;top:614px">request</div>
<div class="a" style="left:1244px;top:609px;width:74px;height:22px;border:1px solid #c2c2c2;border-radius:3px;background:#f0f0f0"></div>
<div class="t" style="left:1267px;top:614px">reset</div>

<!-- schematic -->
<div class="a" style="left:1323px;top:442px;width:169px;height:215px;border:1px solid #c2c2c2"></div>
<div class="t" style="left:1358px;top:663px;font-size:17.3px;line-height:17px">Schematic</div>

<!-- bottom -->
<svg class="a" style="left:15px;top:713px" width="4" height="14"><g fill="#b8b8b8"><rect x="1" y="1" width="1" height="1"/><rect x="1" y="4" width="1" height="1"/><rect x="1" y="7" width="1" height="1"/><rect x="1" y="10" width="1" height="1"/><rect x="0" y="12" width="1" height="1"/><rect x="2" y="12" width="1" height="1"/></g></svg>
<svg class="a" style="left:26px;top:707px" width="22" height="22">
 <path d="M1 19L3 13H19L21 19V21H1Z" fill="#d4d4d4" stroke="#9a9a9a" stroke-width="0.8"/>
 <path d="M3 13H19L21 19H1Z" fill="#e6e6e6"/>
 <rect x="1" y="19" width="20" height="2" fill="#b8b8b8"/>
 <rect x="10" y="5" width="2" height="9" fill="#bdbdbd"/>
 <circle cx="11" cy="4.5" r="3.3" fill="#ee7a22"/>
 <circle cx="4.5" cy="16" r="1.2" fill="#ee7a22"/>
</svg>
<div class="t" style="left:50px;top:713.5px">Virtual Joystic...</div>
<div class="a" style="left:11px;top:735px;width:1500px;height:1px;background:#c8c8c8"></div>
<svg class="a" style="left:1500px;top:745px" width="10" height="10"><g fill="#b0b0b0"><rect x="7" y="1" width="1" height="1"/><rect x="7" y="4" width="1" height="1"/><rect x="4" y="4" width="1" height="1"/><rect x="7" y="7" width="1" height="1"/><rect x="4" y="7" width="1" height="1"/><rect x="1" y="7" width="1" height="1"/></g></svg>

<svg class="a" style="left:1330px;top:465px" width="150" height="170">
 <defs>
  <linearGradient id="cyl" x1="0" x2="1" y1="0" y2="0">
   <stop offset="0" stop-color="#c9c9c9"/><stop offset="0.35" stop-color="#e2e2e2"/><stop offset="0.7" stop-color="#d8d8d8"/><stop offset="1" stop-color="#c2c2c2"/>
  </linearGradient>
 </defs>
 <!-- lower body -->
 <path d="M42 70H119V150C119 156 105 160 80 160C55 160 42 156 42 150Z" fill="url(#cyl)"/>
 <path d="M41 121C60 127 100 127 120 121V129C100 134 60 134 41 129Z" fill="#bdbdbd"/>
 <path d="M41 124C60 130 100 130 120 124" fill="none" stroke="#8a8a8a" stroke-width="1"/>
 <!-- dome -->
 <path d="M72 70V45C72 38 90 33 105 36C115 38 119 42 119 48V70Z" fill="#e4e4e4"/>
 <path d="M72 67C85 64 105 63 119 62" fill="none" stroke="#a0a0a0" stroke-width="1"/>
 <!-- head -->
 <path d="M44 53L52 35C58 28 70 26 78 33L84 40C78 50 74 60 72 80L62 82C52 80 44 72 40 64Z" fill="#e8e8e8"/>
 <path d="M42 78C50 84 62 88 72 86V98C62 100 50 96 42 90Z" fill="#9a9a9a"/>
 <path d="M46 82C55 90 64 92 72 92" fill="none" stroke="#6a6a6a" stroke-width="3"/>
 <ellipse cx="61" cy="44" rx="8.5" ry="11" transform="rotate(15 61 44)" fill="#161616"/>
 <ellipse cx="54" cy="72" rx="6.5" ry="8" transform="rotate(15 54 72)" fill="#1a1a1a"/>
 <circle cx="45" cy="58" r="3.5" fill="#8a8a8a"/>
 <circle cx="62" cy="61" r="3" fill="#8a8a8a"/>
 <path d="M103 34L107 31L109 38" fill="none" stroke="#999" stroke-width="1"/>
 <!-- arcs -->
 <path d="M31 134C12 110 8 70 42 40" fill="none" stroke="#19b521" stroke-width="2"/>
 <path d="M36 32L47 35L39 44Z" fill="#19b521"/>
 <path d="M28 32H36M32 28V36" stroke="#19b521" stroke-width="1.6"/>
 <path d="M29 125H35" stroke="#19b521" stroke-width="1.6"/>
 <path d="M13 71C4 77 4 93 18 100C40 108 75 108 96 104" fill="none" stroke="#dd1c1c" stroke-width="2"/>
 <path d="M94 98L106 104L94 110Z" fill="#dd1c1c"/>
 <path d="M3 67H9" stroke="#dd1c1c" stroke-width="1.6"/>
 <path d="M110 111H119M114.5 106.5V115.5" stroke="#dd1c1c" stroke-width="1.6"/>
 <text x="27" y="22.5" font-family="Liberation Sans" font-size="19" font-weight="bold" fill="#111">Tilt</text>
 <text x="109" y="101" font-family="Liberation Sans" font-size="19" font-weight="bold" fill="#111">Pan</text>
</svg>

</body></html>
